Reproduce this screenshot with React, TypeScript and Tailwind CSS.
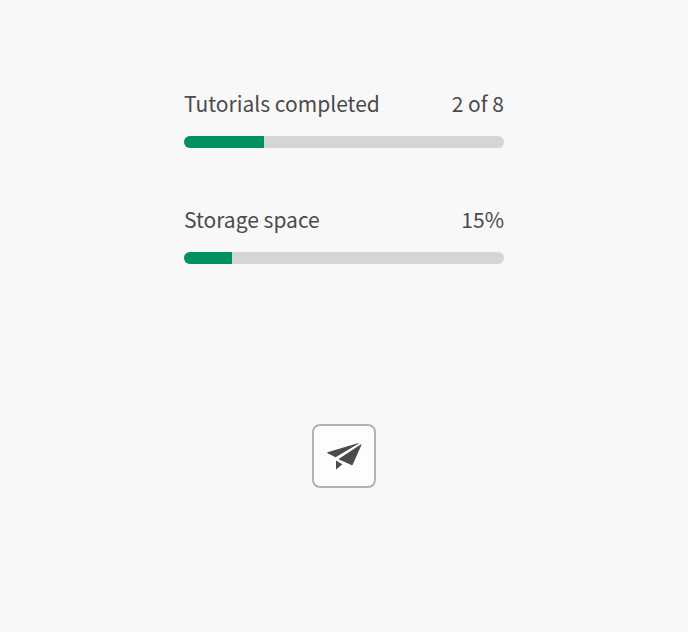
interface MeterProps {
  id: string;
  label: string;
  value: number;
  valueText: string;
}

function Meter({ id, label, value, valueText }: MeterProps) {
  return (
    <div>
      <div className="flex items-baseline justify-between text-[21px] leading-[30px] text-[#4b4b4b]">
        <span id={id}>{label}</span>
        <span>{valueText}</span>
      </div>
      <div
        role="meter"
        aria-labelledby={id}
        aria-valuemin={0}
        aria-valuemax={100}
        aria-valuenow={value}
        aria-valuetext={valueText}
        className="mt-[18px] h-3 overflow-hidden rounded-full bg-[#d5d5d5]"
      >
        <div className="h-full bg-[#009160]" style={{ width: `${value}%` }} />
      </div>
    </div>
  );
}

export default function App() {
  return (
    <main className="flex min-h-screen flex-col items-center bg-[#f8f8f8] px-6 pt-22 font-['Noto_Sans_CJK_SC',sans-serif]">
      {/* Progress meters */}
      <section className="flex w-full max-w-80 flex-col gap-14">
        <Meter id="tutorials" label="Tutorials completed" value={25} valueText="2 of 8" />
        <Meter id="storage" label="Storage space" value={15} valueText="15%" />
      </section>

      {/* Send action */}
      <button
        type="button"
        aria-label="Send"
        className="mt-40 flex size-16 items-center justify-center rounded-lg border-2 border-[#b3b3b3] bg-[#fdfdfd] text-[#4b4b4b]"
      >
        <svg className="size-9" viewBox="0 0 36 36" fill="currentColor" aria-hidden="true">
          <path d="M32.6 5 1.5 14.2Q.7 14.7 1.5 15.2L9.6 19.3 32.7 5.5Q33.2 5 32.6 5z" />
          <path d="M35.1 6.2 13 20.7Q12.5 21.1 13.1 21.4L25.4 27.1Q26.3 27.4 26.7 26.7L35.6 6.6Q35.7 6 35.1 6.2z" />
          <path d="M10 22.5v8.1q0 1 .8.4l5.5-4.7z" />
        </svg>
      </button>
    </main>
  );
}
